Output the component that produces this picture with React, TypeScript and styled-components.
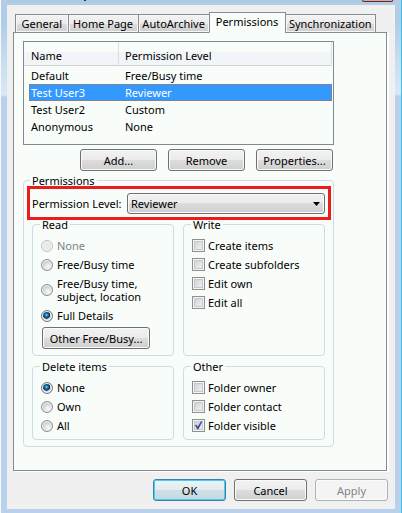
import React, { useState } from "react";
import styled, { createGlobalStyle, css } from "styled-components";

const GlobalStyle = createGlobalStyle`
  * { box-sizing: border-box; }
  body { margin: 0; background: #b9d1ea; }
  body, button, select, input {
    font-family: "Noto Sans", "Open Sans", sans-serif;
    font-size: 11px;
    line-height: 15px;
    color: #000;
  }
`;

const paper = "#f8fdfa";
const groupLine = "#cfdbe5";

const WindowFrame = styled.div`
  display: flex;
  flex-direction: column;
  min-height: 100vh;
  padding: 0 6px 5px;
  border-left: 1px solid #f4f9fd;
  border-right: 1px solid #35c0ee;
  background:
    linear-gradient(#b3cde6 0, #b0cbe6 20px, #c3dbef 55px, #d9e9f6 95px, #b9d1ea 97px) left / 6px 100% no-repeat,
    linear-gradient(#b3cde6 0, #b0cbe6 20px, #c3dbef 55px, #d9e9f6 94px, #b9d1ea 96px) right / 6px 100% no-repeat,
    linear-gradient(#abc8e2, #b3cfe8) top / 100% 5px no-repeat,
    #b9d1ea;
`;

const TitleBar = styled.div`
  display: flex;
  justify-content: space-between;
  height: 5px;
  padding: 0 2px 0 77px;
`;

const TitleMark = styled.span`
  width: 2px;
  height: 1px;
  background: #26323d;
`;

const CloseEdge = styled.span`
  width: 31px;
  height: 2px;
  border: 1px solid #5b2f35;
  border-top: 0;
  border-radius: 0 0 3px 3px;
  background: #d9a79c;
`;

const Client = styled.main`
  flex: 1;
  padding: 7px 8px 8px 6px;
  background: #f0f0f0;
`;

const TabStrip = styled.div`
  position: relative;
  display: flex;
  align-items: flex-end;
  padding: 0 11px 0 3px;
  margin-bottom: -1px;
`;

const Tab = styled.button<{ $active?: boolean; $grow: number }>`
  flex: ${(p) => p.$grow} 1 0;
  height: 19px;
  margin-left: -1px;
  padding: 0;
  border: 1px solid #898c95;
  border-bottom-color: #868c93;
  background: linear-gradient(#f3f3f3, #ebebeb 50%, #dddddd 51%, #cfcfcf);
  box-shadow: inset 0 0 0 1px #f6f6f6;
  white-space: nowrap;
  ${(p) =>
    p.$active &&
    css`
      height: 21px;
      padding-bottom: 3px;
      border-bottom-color: ${paper};
      background: ${paper};
      box-shadow: none;
    `}
`;

const Panel = styled.section`
  padding: 8px 52px 23px 9px;
  border: 1px solid #868b90;
  box-shadow: 2px 1px 0 #fff;
  background: ${paper};
`;

const ListBox = styled.div`
  height: 104px;
  padding-right: 1px;
  border: 1px solid #828790;
`;

const UserTable = styled.table`
  width: 100%;
  border-collapse: separate;
  border-spacing: 0;
  table-layout: fixed;
`;

const HeadCell = styled.th<{ $first?: boolean }>`
  width: ${(p) => (p.$first ? "95px" : "auto")};
  height: 24px;
  padding: 3px 0 0 ${(p) => (p.$first ? 7 : 6)}px;
  border-right: 1px solid #dcdfe4;
  border-bottom: 1px solid #d0d3d6;
  background: linear-gradient(${paper} 40%, #f1f4f8 45%, #f2f5f8);
  text-align: left;
  font-weight: normal;
`;

const Spacer = styled.tr`
  height: 1px;
  td { padding: 0; }
`;

const UserRow = styled.tr`
  cursor: default;
  td { padding: 0; }
`;

const dotsAcross = "repeating-linear-gradient(90deg, #c96d22 0 1px, #3399ff 1px 2px)";
const dotsDown = "repeating-linear-gradient(#c96d22 0 1px, #3399ff 1px 2px)";

const CellText = styled.div<{ $selected: boolean; $first?: boolean }>`
  height: 17px;
  margin-left: ${(p) => (p.$first ? 5 : 0)}px;
  padding: 1px 0 0 ${(p) => (p.$first ? 2 : 6)}px;
  ${(p) =>
    p.$selected &&
    css`
      color: #fff;
      background:
        ${dotsAcross} top / 100% 1px no-repeat,
        ${dotsAcross} bottom / 100% 1px no-repeat,
        ${dotsDown} ${p.$first ? "left" : "right"} / 1px 100% no-repeat,
        #3399ff;
    `}
`;

const ButtonRow = styled.div`
  display: flex;
  justify-content: flex-end;
  gap: 11px;
  padding: 4px 1px 2px 0;
`;

const PushButton = styled.button<{ $look?: "default"; $width: number }>`
  width: ${(p) => p.$width}px;
  height: 22px;
  padding: 0;
  border: 1px solid #707070;
  border-radius: 3px;
  background: linear-gradient(#f2f2f2, #ebebeb 49%, #dddddd 50%, #cfcfcf);
  box-shadow: inset 0 0 0 1px #fafafa;
  ${(p) =>
    p.$look === "default" &&
    css`
      border-color: #3c7fb1;
      background: linear-gradient(#eef3f5, #e2ebef 49%, #cfdfe6 50%, #c9d8df);
      box-shadow: inset 0 0 0 1px #46cdf3;
    `}
  &:disabled {
    border-color: #adb2b5;
    background: #f4f4f4;
    color: #838383;
  }
`;

const Group = styled.fieldset<{ $outer?: boolean }>`
  min-width: 0;
  margin: 0;
  padding: ${(p) => (p.$outer ? "5px 8px 6px" : "4px 8px 0")};
  border: 1px solid ${groupLine};
  border-radius: 4px;
`;

const Legend = styled.legend<{ $outer?: boolean }>`
  height: 15px;
  margin-left: ${(p) => (p.$outer ? "-2px" : "-1px")};
  padding: 0 2px;
`;

const LevelRow = styled.div`
  position: relative;
  display: flex;
  align-items: center;
  margin-bottom: 3px;
  &::after {
    content: "";
    position: absolute;
    inset: -7px -6px -6px -5px;
    border: 3px solid #ed1c1c;
    pointer-events: none;
  }
`;

const LevelLabel = styled.label`
  flex: 0 0 95px;
  white-space: nowrap;
`;

const SelectShell = styled.div`
  flex: 1;
  display: grid;
  align-items: center;
  > * { grid-area: 1 / 1; }
  > svg { justify-self: end; margin-right: 5px; pointer-events: none; }
`;

const LevelSelect = styled.select`
  appearance: none;
  width: 100%;
  height: 21px;
  padding: 0 3px;
  border: 1px solid #707070;
  border-radius: 3px;
  background: linear-gradient(#f2f2f2, #ebebeb 49%, #dddddd 50%, #cfcfcf);
  box-shadow: inset 0 0 0 1px #fafafa;
`;

const Quadrants = styled.div`
  display: grid;
  grid-template-columns: 1fr 1fr;
  grid-template-rows: 139px 81px;
  column-gap: 9px;
  row-gap: 3px;
`;

const Option = styled.label<{ $tall?: boolean; $dim?: boolean; $gap: number }>`
  display: flex;
  align-items: center;
  gap: ${(p) => p.$gap}px;
  height: ${(p) => (p.$tall ? 32 : 19)}px;
  color: ${(p) => (p.$dim ? "#7f7f7f" : "#000")};
  line-height: 13px;
  white-space: pre-line;
`;

const Radio = styled.input`
  appearance: none;
  flex: none;
  width: 12px;
  height: 12px;
  margin: 0;
  border: 1px solid #8e8f8f;
  border-radius: 50%;
  background: radial-gradient(circle at 60% 65%, #f4f4f4 10%, #c9ced2 60%);
  box-shadow: inset 0 0 0 1px #f4f4f4;
  &:disabled { border-color: #bfc3c3; background: #e9ebea; }
  &:checked {
    border-color: #6f7a82;
    background: radial-gradient(circle at 45% 40%, #7fd6f5 0, #1b6f9c 20%, #0b3a5c 42%, #d5dde1 50%);
  }
`;

const CheckShell = styled.span`
  display: grid;
  flex: none;
  > * { grid-area: 1 / 1; }
  > svg { pointer-events: none; }
`;

const Check = styled.input`
  appearance: none;
  width: 13px;
  height: 13px;
  margin: 0;
  border: 1px solid #8e8f8f;
  background: linear-gradient(135deg, #c8cdd2, #f6f6f6);
  background-clip: content-box;
  padding: 2px;
  box-shadow: inset 0 0 0 1px #f4f4f4, inset 0 0 0 2px #c4c9ce;
`;

const FreeBusyLine = styled.div`
  padding: 2px 0 0 1px;
`;

const Footer = styled.footer`
  display: flex;
  justify-content: flex-end;
  gap: 8px;
  margin-right: -1px;
  padding-top: 8px;
`;

const tabs: [string, number][] = [
  ["General", 53],
  ["Home Page", 71],
  ["AutoArchive", 72],
  ["Permissions", 77],
  ["Synchronization", 92],
];

const users = [
  ["Default", "Free/Busy time"],
  ["Test User3", "Reviewer"],
  ["Test User2", "Custom"],
  ["Anonymous", "None"],
];

type RadioItem = { label: string; tall?: boolean; disabled?: boolean };

function RadioList({ name, items, initial }: { name: string; items: RadioItem[]; initial: string }) {
  const [value, setValue] = useState(initial);
  return (
    <>
      {items.map((item) => (
        <Option key={item.label} $tall={item.tall} $dim={item.disabled} $gap={4}>
          <Radio
            type="radio"
            name={name}
            disabled={item.disabled}
            checked={value === item.label}
            onChange={() => setValue(item.label)}
          />
          {item.label}
        </Option>
      ))}
    </>
  );
}

function CheckOption({ label, initial = false }: { label: string; initial?: boolean }) {
  const [on, setOn] = useState(initial);
  return (
    <Option $gap={3}>
      <CheckShell>
        <Check type="checkbox" checked={on} onChange={() => setOn(!on)} />
        {on && (
          <svg width="13" height="13" viewBox="0 0 13 13" aria-hidden="true">
            <path d="M3 6.2L4.3 5.4L5.7 7.6L9 2.2L10.4 2.6L6.4 10.2H5.2Z" fill="#3b4f9c" />
          </svg>
        )}
      </CheckShell>
      {label}
    </Option>
  );
}

export default function App() {
  const [selected, setSelected] = useState("Test User3");
  return (
    <>
      <GlobalStyle />
      <WindowFrame>
        <TitleBar>
          <TitleMark />
          <CloseEdge />
        </TitleBar>
        <Client>
          <TabStrip role="tablist">
            {tabs.map(([label, grow]) => (
              <Tab
                key={label}
                type="button"
                role="tab"
                aria-selected={label === "Permissions"}
                $active={label === "Permissions"}
                $grow={grow}
              >
                {label}
              </Tab>
            ))}
          </TabStrip>
          <Panel>
            <ListBox>
              <UserTable>
                <thead>
                  <tr>
                    <HeadCell $first>Name</HeadCell>
                    <HeadCell>Permission Level</HeadCell>
                  </tr>
                </thead>
                <tbody>
                  <Spacer aria-hidden="true"><td colSpan={2} /></Spacer>
                  {users.map(([name, level]) => (
                    <UserRow key={name} onClick={() => setSelected(name)}>
                      <td><CellText $first $selected={name === selected}>{name}</CellText></td>
                      <td><CellText $selected={name === selected}>{level}</CellText></td>
                    </UserRow>
                  ))}
                </tbody>
              </UserTable>
            </ListBox>
            <ButtonRow>
              <PushButton type="button" $width={77}>Add...</PushButton>
              <PushButton type="button" $width={77}>Remove</PushButton>
              <PushButton type="button" $width={77}>Properties...</PushButton>
            </ButtonRow>
            <Group $outer>
              <Legend $outer>Permissions</Legend>
              <LevelRow>
                <LevelLabel htmlFor="level">Permission Level:</LevelLabel>
                <SelectShell>
                  <LevelSelect id="level" defaultValue="Reviewer">
                    <option>Reviewer</option>
                    <option>Custom</option>
                    <option>None</option>
                  </LevelSelect>
                  <svg width="7" height="4" viewBox="0 0 7 4" aria-hidden="true">
                    <path d="M0 0H7L3.5 4Z" fill="#000" />
                  </svg>
                </SelectShell>
              </LevelRow>
              <Quadrants>
                <Group>
                  <Legend>Read</Legend>
                  <RadioList
                    name="read"
                    initial="Full Details"
                    items={[
                      { label: "None", disabled: true },
                      { label: "Free/Busy time" },
                      { label: "Free/Busy time,\nsubject, location", tall: true },
                      { label: "Full Details" },
                    ]}
                  />
                  <FreeBusyLine>
                    <PushButton type="button" $width={108}>Other Free/Busy...</PushButton>
                  </FreeBusyLine>
                </Group>
                <Group>
                  <Legend>Write</Legend>
                  <CheckOption label="Create items" />
                  <CheckOption label="Create subfolders" />
                  <CheckOption label="Edit own" />
                  <CheckOption label="Edit all" />
                </Group>
                <Group>
                  <Legend>Delete items</Legend>
                  <RadioList
                    name="delete"
                    initial="None"
                    items={[{ label: "None" }, { label: "Own" }, { label: "All" }]}
                  />
                </Group>
                <Group>
                  <Legend>Other</Legend>
                  <CheckOption label="Folder owner" />
                  <CheckOption label="Folder contact" />
                  <CheckOption label="Folder visible" initial />
                </Group>
              </Quadrants>
            </Group>
          </Panel>
          <Footer>
            <PushButton type="button" $width={73} $look="default">OK</PushButton>
            <PushButton type="button" $width={73}>Cancel</PushButton>
            <PushButton type="button" $width={73} disabled>Apply</PushButton>
          </Footer>
        </Client>
      </WindowFrame>
    </>
  );
}
